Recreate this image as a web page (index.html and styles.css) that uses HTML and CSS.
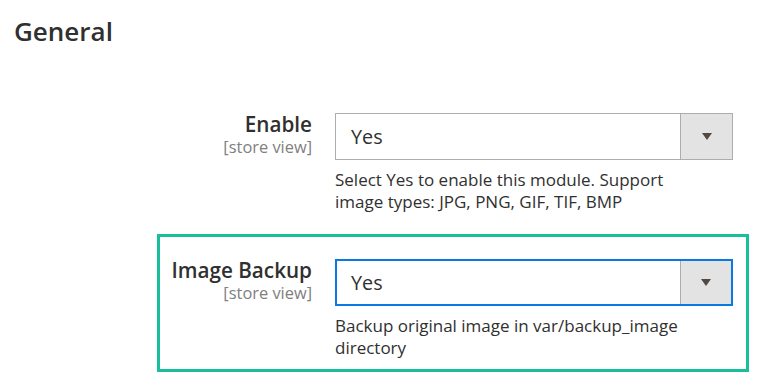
FILE: index.html
```html
<!DOCTYPE html>
<html lang="en">
<head>
    <meta charset="UTF-8">
    <meta name="viewport" content="width=device-width, initial-scale=1.0">
    <title>General</title>
    <link rel="stylesheet" href="styles.css">
</head>
<body>
    <div class="section">
        <h2 class="section-title">General</h2>

        <div class="field">
            <div class="field-label">
                <span class="label-text">Enable</span>
                <span class="scope">[store view]</span>
            </div>
            <div class="field-control">
                <div class="select">
                    <span class="select-value">Yes</span>
                    <span class="select-btn"><span class="arrow"></span></span>
                </div>
                <p class="note">Select Yes to enable this module. Support image types: JPG, PNG, GIF, TIF, BMP</p>
            </div>
        </div>

        <div class="field highlighted">
            <div class="field-label">
                <span class="label-text">Image Backup</span>
                <span class="scope">[store view]</span>
            </div>
            <div class="field-control">
                <div class="select focused">
                    <span class="select-value">Yes</span>
                    <span class="select-btn"><span class="arrow"></span></span>
                </div>
                <p class="note">Backup original image in var/backup_image directory</p>
            </div>
        </div>
    </div>
</body>
</html>
```

FILE: styles.css
```css
* {
    margin: 0;
    padding: 0;
    box-sizing: border-box;
}

body {
    font-family: 'Open Sans', 'Liberation Sans', sans-serif;
    color: #303030;
    background: #fff;
}

.section-title {
    font-size: 26px;
    font-weight: 600;
    line-height: 30px;
    margin: 16px 0 42px 14px;
}

.field {
    display: flex;
    width: 592px;
    margin-left: 157px;
    padding: 22px 13px 10px 0;
    border: 3px solid transparent;
    margin-bottom: 8px;
}

.field.highlighted {
    border-color: #19bf9c;
}

.field-label {
    flex: 0 0 152px;
    margin-right: 23px;
    display: flex;
    flex-direction: column;
    align-items: flex-end;
    text-align: right;
}

.label-text {
    font-size: 20.7px;
    font-weight: 600;
    line-height: 23px;
    white-space: nowrap;
}

.scope {
    font-size: 16.4px;
    line-height: 19px;
    margin-top: 1px;
    color: #808080;
    white-space: nowrap;
}

.field-control {
    flex: 0 0 398px;
}

.select {
    display: flex;
    height: 47px;
    border: 1px solid #adadad;
    background: #fff;
}

.select-value {
    flex: 1;
    font-size: 19.8px;
    line-height: 45px;
    padding-left: 15px;
}

.select-btn {
    width: 52px;
    border-left: 1px solid #adadad;
    background: #e3e3e3;
    display: flex;
    align-items: center;
    justify-content: center;
}

.arrow {
    width: 0;
    height: 0;
    border-left: 5.5px solid transparent;
    border-right: 5.5px solid transparent;
    border-top: 7px solid #514943;
}

.select.focused {
    border: 2px solid #0a7ae2;
}

.select.focused .select-value {
    padding-left: 14px;
    line-height: 43px;
}

.select.focused .select-btn {
    width: 51px;
}

.note {
    font-size: 17px;
    line-height: 22px;
    margin-top: 9px;
    max-width: 380px;
}
```
